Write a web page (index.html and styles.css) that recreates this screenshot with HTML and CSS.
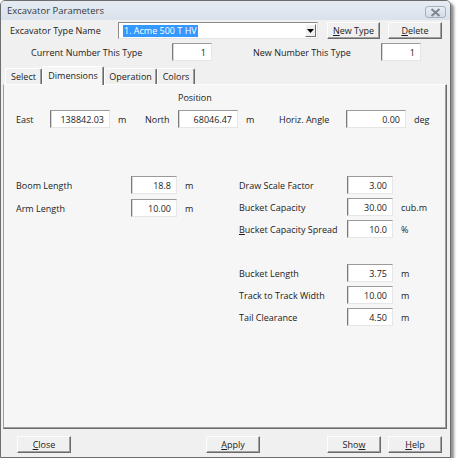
FILE: index.html
```html
<!DOCTYPE html>
<html>
<head>
<meta charset="utf-8">
<link rel="stylesheet" href="styles.css">
</head>
<body>
<div class="window">
  <div class="titlebar">
    <span class="title">Excavator Parameters</span>
    <span class="closebtn"><svg width="11" height="9" viewBox="0 0 11 9"><path d="M1.5 1 L9.5 8 M9.5 1 L1.5 8" stroke="#7d8591" stroke-width="2" fill="none"/></svg></span>
  </div>
  <div class="client">
    <div class="row1">
      <span class="lbl-type">Excavator Type Name</span>
      <div class="combo">
        <span class="sel">1. Acme 500 T HV</span>
        <span class="ddarrow"><svg width="7" height="4" viewBox="0 0 7 4"><path d="M0 0 H7 L3.5 4 Z" fill="#000"/></svg></span>
      </div>
      <span class="btn btn-newtype"><u>N</u>ew Type</span>
      <span class="btn btn-delete"><u>D</u>elete</span>
    </div>
    <div class="row2">
      <span class="lbl-cur">Current Number This Type</span>
      <span class="field f-num">1</span>
      <span class="lbl-new">New Number This Type</span>
      <span class="field f-num">1</span>
    </div>
    <div class="tabs">
      <span class="tab t-select">Select</span>
      <span class="tab t-dim active">Dimensions</span>
      <span class="tab t-op">Operation</span>
      <span class="tab t-col">Colors</span>
    </div>
    <div class="panel">
      <div class="pos-heading">Position</div>
      <div class="pos-row">
        <span class="pl pl-east">East</span>
        <span class="field f-wide">138842.03</span>
        <span class="pu pu-1">m</span>
        <span class="pl pl-north">North</span>
        <span class="field f-wide">68046.47</span>
        <span class="pu pu-2">m</span>
        <span class="pl pl-horiz">Horiz. Angle</span>
        <span class="field f-wide">0.00</span>
        <span class="pu pu-3">deg</span>
      </div>
      <div class="lower">
        <div class="col col-left">
          <div class="frow">
            <span class="fl fl-left">Boom Length</span>
            <span class="field f-mid">18.8</span>
            <span class="fu">m</span>
          </div>
          <div class="frow frow-arm">
            <span class="fl fl-left">Arm Length</span>
            <span class="field f-mid">10.00</span>
            <span class="fu">m</span>
          </div>
        </div>
        <div class="col col-right">
          <div class="frow">
            <span class="fl fl-right">Draw Scale Factor</span>
            <span class="field f-mid">3.00</span>
          </div>
          <div class="frow frow-r">
            <span class="fl fl-right">Bucket Capacity</span>
            <span class="field f-mid">30.00</span>
            <span class="fu">cub.m</span>
          </div>
          <div class="frow frow-r">
            <span class="fl fl-right"><u>B</u>ucket Capacity Spread</span>
            <span class="field f-mid">10.0</span>
            <span class="fu">%</span>
          </div>
          <div class="frow frow-group">
            <span class="fl fl-right">Bucket Length</span>
            <span class="field f-mid">3.75</span>
            <span class="fu">m</span>
          </div>
          <div class="frow frow-r">
            <span class="fl fl-right">Track to Track Width</span>
            <span class="field f-mid">10.00</span>
            <span class="fu">m</span>
          </div>
          <div class="frow frow-r">
            <span class="fl fl-right">Tail Clearance</span>
            <span class="field f-mid">4.50</span>
            <span class="fu">m</span>
          </div>
        </div>
      </div>
    </div>
    <div class="footer">
      <span class="btn b-close"><u>C</u>lose</span>
      <span class="btn b-apply"><u>A</u>pply</span>
      <span class="btn b-show">Sho<u>w</u></span>
      <span class="btn b-help"><u>H</u>elp</span>
    </div>
  </div>
</div>
</body>
</html>
```
FILE: styles.css
```css
* { box-sizing: border-box; }
html, body { margin: 0; padding: 0; background: #ffffff; }
body {
  font-family: "Open Sans", "Noto Sans", sans-serif;
  font-size: 9px;
  color: #1b1b1b;
}
u { text-decoration: underline; text-underline-offset: 1px; }

.window {
  width: 451px;
  height: 458px;
  border: 1px solid #6d6d6d;
  border-radius: 5px 5px 0 0;
  background: #f0f0f0;
  box-shadow: 3px 3px 3px rgba(0,0,0,0.45);
  display: flex;
  flex-direction: column;
}

.titlebar {
  height: 19px;
  background: linear-gradient(#e4ebf3, #d9e2ec);
  border-radius: 4px 4px 0 0;
  display: flex;
  align-items: center;
  padding-left: 6px;
  color: #3a3a3a;
}
.title { flex: 1; font-size: 9.5px; }
.closebtn {
  width: 21px;
  height: 12px;
  margin-right: 4px;
  margin-top: 3px;
  border: 1px solid #a7b0bc;
  border-radius: 3px;
  background: linear-gradient(#e8edf3, #d3dbe5);
  display: flex;
  align-items: center;
  justify-content: center;
}
.closebtn svg { display: block; }

.client {
  flex: 1;
  display: flex;
  flex-direction: column;
  background: #f0f0f0;
}

.row1 {
  display: flex;
  align-items: center;
  height: 17px;
  margin-top: 2px;
}
.lbl-type { margin-left: 9px; width: 108px; }
.combo {
  width: 200px;
  height: 17px;
  background: #fff;
  border: 1px solid;
  border-color: #8a8a8a #e3e3e3 #e3e3e3 #8a8a8a;
  display: flex;
  align-items: center;
  padding-left: 4px;
}
.sel {
  background: #3399ff;
  color: #fff;
  padding: 0 1px;
  line-height: 12px;
  flex: none;
}
.ddarrow {
  margin-left: auto;
  width: 11px;
  height: 13px;
  margin-right: 1px;
  background: #f0f0f0;
  border: 1px solid;
  border-color: #fff #6e6e6e #6e6e6e #fff;
  display: flex;
  align-items: center;
  justify-content: center;
}
.ddarrow svg { display: block; }

.btn {
  display: flex;
  align-items: center;
  justify-content: center;
  height: 17px;
  background: #f0f0f0;
  border: 1px solid;
  border-color: #fdfdfd #6a6a6a #6a6a6a #fdfdfd;
  box-shadow: inset -1px -1px 0 #a0a0a0;
  color: #1b1b1b;
}
.btn-newtype { margin-left: 9px; width: 53px; }
.btn-delete { margin-left: 8px; width: 54px; }

.row2 {
  display: flex;
  align-items: center;
  height: 18px;
  margin-top: 4px;
}
.lbl-cur { width: 171px; padding-left: 30px; }
.lbl-new { margin-left: 41px; width: 128px; }

.field {
  height: 18px;
  background: #fff;
  border: 1px solid;
  border-color: #9a9a9a #e6e6e6 #e6e6e6 #7a7a7a;
  box-shadow: inset 1px 0 0 #d6d6d6;
  display: flex;
  align-items: center;
  justify-content: flex-end;
  padding-right: 5px;
  flex: none;
}
.f-num { width: 40px; }
.f-wide { width: 60px; }
.f-mid { width: 46px; }

.tabs {
  display: flex;
  align-items: flex-end;
  height: 18px;
  margin-top: 5px;
  padding-left: 4px;
  position: relative;
  z-index: 1;
}
.tab {
  height: 16px;
  display: flex;
  align-items: center;
  justify-content: center;
  background: #f0f0f0;
  border-top: 1px solid #fff;
  border-left: 1px solid #fff;
  border-right: 1px solid #6a6a6a;
  box-shadow: inset -1px 0 0 #a0a0a0;
  border-radius: 2px 2px 0 0;
}
.t-select { width: 37px; }
.t-dim { width: 62px; }
.t-op { width: 53px; }
.t-col { width: 38px; }
.tab.active {
  height: 19px;
  margin-bottom: -1px;
  background: #f6f6f6;
  padding-bottom: 2px;
}

.panel {
  margin-left: 2px;
  width: 444px;
  height: 345px;
  background: #f6f6f6;
  border: 1px solid;
  border-color: #fdfdfd #6a6a6a #6a6a6a #a0a0a0;
  box-shadow: inset -1px -1px 0 #a0a0a0;
  display: flex;
  flex-direction: column;
}

.pos-heading {
  margin-left: 174px;
  margin-top: 6px;
  line-height: 13px;
  height: 13px;
}
.pos-row {
  display: flex;
  align-items: center;
  height: 18px;
  margin-top: 6px;
}
.pl-east { margin-left: 12px; width: 34px; }
.pu { padding-left: 8px; }
.pu-1 { width: 35px; }
.pl-north { width: 33px; }
.pu-2 { width: 41px; }
.pl-horiz { width: 67px; }

.lower {
  display: flex;
  margin-top: 48px;
}
.col { display: flex; flex-direction: column; }
.col-left { margin-left: 12px; width: 223px; }
.frow {
  display: flex;
  align-items: center;
  height: 18px;
}
.frow-arm { margin-top: 5px; }
.frow-r { margin-top: 4px; }
.frow-group { margin-top: 26px; }
.fl-left { width: 115px; }
.fl-right { width: 108px; }
.fu { padding-left: 8px; }

.footer {
  display: flex;
  margin-top: 7px;
  height: 17px;
}
.b-close { margin-left: 16px; width: 54px; }
.b-apply { margin-left: 135px; width: 54px; }
.b-show { margin-left: 67px; width: 54px; }
.b-help { margin-left: 7px; width: 54px; }
```
